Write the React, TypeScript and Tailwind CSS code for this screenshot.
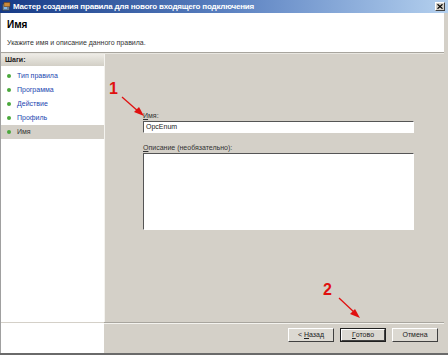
import React from 'react';

const steps = ['Тип правила', 'Программа', 'Действие', 'Профиль', 'Имя'];

function WinButton({ children, primary }: { children: React.ReactNode; primary?: boolean }) {
  return (
    <div className={`h-[14px] w-[46px] ${primary ? 'border border-[#202020]' : ''}`}>
      <div className="flex h-full w-full items-center justify-center border border-t-white border-l-white border-b-[#404040] border-r-[#404040] bg-[#dcd9d2] text-[7px] text-[#222]">
        {children}
      </div>
    </div>
  );
}

export default function App() {
  return (
    <div
      className="relative flex h-[355px] w-[448px] flex-col overflow-hidden bg-[#d4d0c8]"
      style={{ fontFamily: '"Liberation Sans", Arial, sans-serif' }}
    >
      {/* title bar */}
      <div className="flex h-[13px] items-center bg-gradient-to-r from-[#163a86] via-[#5a80c0] to-[#b4d0ee] pl-[2px] pr-[3px]">
        <svg width="9" height="9" viewBox="0 0 9 9">
          <rect x="0.5" y="2" width="7" height="6.5" fill="#6b7f95" stroke="#2b3a4a" strokeWidth="0.6" />
          <rect x="2" y="0.5" width="6" height="4" fill="#c98a3a" stroke="#6a3d10" strokeWidth="0.5" />
          <rect x="2" y="5" width="3" height="2" fill="#7fb8e8" />
        </svg>
        <span className="ml-[2px] text-[8px] font-bold tracking-[-0.2px] text-white">
          Мастер создания правила для нового входящего подключения
        </span>
        <div className="ml-auto flex h-[9px] w-[10px] items-center justify-center border border-t-white border-l-white border-b-[#404040] border-r-[#404040] bg-[#d4d0c8]">
          <svg width="6" height="5" viewBox="0 0 6 5">
            <path d="M0.5 0.3 L5.5 4.7 M5.5 0.3 L0.5 4.7" stroke="#000" strokeWidth="1.2" />
          </svg>
        </div>
      </div>

      <div className="flex flex-1 flex-col border-l border-[#a0a0a0] border-r-[4px] border-r-[#d4d0c8]">
        {/* header */}
        <div className="flex h-[39px] flex-col bg-white pl-[6px]">
          <div className="mt-[6px] text-[10px] font-bold leading-[11px] text-black">Имя</div>
          <div className="mt-[9px] text-[7px] leading-[8px] text-[#333]">Укажите имя и описание данного правила.</div>
        </div>
        <div className="h-[1px] bg-[#a8a59e]" />
        <div className="h-[1px] bg-[#e8e6e0]" />

        {/* main */}
        <div className="flex flex-1">
          <div className="flex w-[103px] flex-col bg-white">
            <div className="flex h-[12px] items-center bg-gradient-to-b from-[#eeece6] to-[#d2cfc6] pl-[4px] text-[7px] font-bold text-[#222]">
              Шаги:
            </div>
            <div className="mt-[3px] flex flex-col">
              {steps.map((s, i) => (
                <div
                  key={s}
                  className={`flex h-[14px] items-center pl-[6px] text-[7px] ${
                    i === steps.length - 1 ? 'bg-[#d4d0c8] text-[#333]' : 'text-[#2346b0]'
                  }`}
                >
                  <span className="mr-[6px] h-[4px] w-[4px] rounded-full bg-[#4aa83c]" />
                  {s}
                </div>
              ))}
            </div>
          </div>
          <div className="w-[3px] border-l border-[#f4f3ef] bg-[#d4d0c8]" />

          <div className="flex flex-1 flex-col pl-[36px] pr-[30px] pt-[57px]">
            <div className="text-[7px] leading-[9px] text-[#333]">
              <span className="underline">И</span>мя:
            </div>
            <div className="mt-[1px] flex h-[12px] items-center border border-t-[#555] border-l-[#555] border-b-white border-r-white bg-white pl-[2px] text-[7px] text-[#222]">
              OpcEnum
            </div>
            <div className="mt-[10px] text-[7px] leading-[9px] text-[#333]">
              <span className="underline">О</span>писание (необязательно):
            </div>
            <div className="mt-[1px] h-[77px] border border-t-[#555] border-l-[#555] border-b-white border-r-white bg-white" />
          </div>
        </div>

        {/* bottom bar */}
        <div className="ml-[103px] h-[1px] bg-[#a8a59e]" />
        <div className="flex h-[30px]">
          <div className="w-[103px] bg-white" />
          <div className="flex flex-1 items-start justify-end gap-[6px] border-t border-[#f4f3ef] pr-[6px] pt-[4px]">
            <WinButton>
              &lt;&nbsp;<span className="underline">Н</span>азад
            </WinButton>
            <WinButton primary>
              <span className="underline">Г</span>отово
            </WinButton>
            <WinButton>Отмена</WinButton>
          </div>
        </div>
      </div>
      <div className="h-[2px] bg-[#6a6a6a]" />

      {/* annotations */}
      <div className="absolute left-[109px] top-[81px] text-[16px] font-bold leading-[16px] text-[#e01010]">1</div>
      <div className="absolute left-[323px] top-[282px] text-[16px] font-bold leading-[16px] text-[#e01010]">2</div>
      <svg className="absolute left-0 top-0" width="448" height="355" viewBox="0 0 448 355">
        <line x1="122" y1="97" x2="139" y2="112" stroke="#e01010" strokeWidth="1.3" />
        <polygon points="144,116 134,112 139,107" fill="#e01010" />
        <line x1="339" y1="298" x2="355" y2="313" stroke="#e01010" strokeWidth="1.3" />
        <polygon points="360,318 350,314 355,309" fill="#e01010" />
      </svg>
    </div>
  );
}
